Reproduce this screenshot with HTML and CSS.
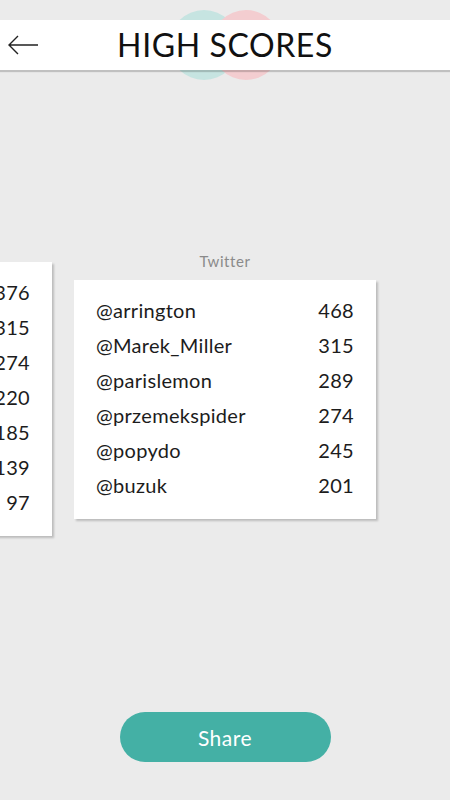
FILE: index.html
```html
<!DOCTYPE html>
<html>
<head>
<meta charset="utf-8">
<link rel="stylesheet" href="styles.css">
</head>
<body>
<div class="page">
  <div class="status"></div>
  <div class="header-wrap">
    <div class="blob blob-teal"></div>
    <div class="blob blob-pink"></div>
    <header class="header">
      <button class="back" aria-label="Back">
        <svg width="32" height="20" viewBox="0 0 32 20"><path d="M31 10H2M11 1L2 10L11 19" fill="none" stroke="#222" stroke-width="1.4"/></svg>
      </button>
      <h1 class="title">HIGH SCORES</h1>
    </header>
  </div>
  <main class="content">
    <div class="track">
      <section class="slide">
        <div class="label"></div>
        <div class="card">
          <div class="row"><span class="name"></span><span class="score">376</span></div>
          <div class="row"><span class="name"></span><span class="score">315</span></div>
          <div class="row"><span class="name"></span><span class="score">274</span></div>
          <div class="row"><span class="name"></span><span class="score">220</span></div>
          <div class="row"><span class="name"></span><span class="score">185</span></div>
          <div class="row"><span class="name"></span><span class="score">139</span></div>
          <div class="row"><span class="name"></span><span class="score">97</span></div>
        </div>
      </section>
      <section class="slide">
        <div class="label">Twitter</div>
        <div class="card">
          <div class="row"><span class="name">@arrington</span><span class="score">468</span></div>
          <div class="row"><span class="name">@Marek_Miller</span><span class="score">315</span></div>
          <div class="row"><span class="name">@parislemon</span><span class="score">289</span></div>
          <div class="row"><span class="name">@przemekspider</span><span class="score">274</span></div>
          <div class="row"><span class="name">@popydo</span><span class="score">245</span></div>
          <div class="row"><span class="name">@buzuk</span><span class="score">201</span></div>
        </div>
      </section>
    </div>
  </main>
  <footer class="footer">
    <button class="share">Share</button>
  </footer>
</div>
</body>
</html>
```
FILE: styles.css
```css
html, body {
  margin: 0;
  padding: 0;
}
body {
  background: #ebebeb;
  font-family: "Lato", "Open Sans", sans-serif;
  color: #222;
  overflow: hidden;
}
.page {
  width: 450px;
  height: 800px;
  display: flex;
  flex-direction: column;
  overflow: hidden;
}
.status {
  height: 20px;
  flex: none;
}
.header-wrap {
  position: relative;
  height: 52px;
  flex: none;
}
.blob {
  position: absolute;
  top: -10px;
  width: 70px;
  height: 70px;
  border-radius: 50%;
}
.blob-teal {
  left: 169px;
  background: #c6e4e1;
}
.blob-pink {
  left: 211px;
  background: #f3cdd0;
}
.header {
  position: relative;
  height: 50px;
  background: #fff;
  box-shadow: 0 2px 1px rgba(0,0,0,0.18);
  display: flex;
  align-items: center;
  justify-content: center;
}
.back {
  position: absolute;
  left: 7px;
  top: 15px;
  background: none;
  border: 0;
  padding: 0;
  width: 32px;
  height: 20px;
  display: flex;
}
.title {
  margin: 0;
  font-weight: 400;
  font-size: 32px;
  letter-spacing: 0.6px;
  line-height: 50px;
  color: #111;
}
.content {
  flex: 1;
  display: flex;
  align-items: center;
  overflow: hidden;
  padding-bottom: 2px;
}
.track {
  display: flex;
  align-items: center;
  gap: 22px;
  margin-left: -250px;
}
.slide {
  width: 302px;
  flex: none;
  display: flex;
  flex-direction: column;
  align-items: stretch;
}
.label {
  text-align: center;
  font-size: 15px;
  letter-spacing: 0.6px;
  line-height: 18px;
  height: 18px;
  color: #8a8a8a;
  margin-bottom: 10px;
}
.card {
  background: #fff;
  padding: 13px 22px 16px;
  box-shadow: 2px 2px 2px rgba(0,0,0,0.2);
}
.row {
  display: flex;
  justify-content: space-between;
  height: 35px;
  line-height: 35px;
  font-size: 20px;
  letter-spacing: 0.3px;
  color: #1c1c1c;
}
.footer {
  height: 100px;
  flex: none;
  display: flex;
  justify-content: center;
  align-items: flex-start;
  padding-top: 12px;
  box-sizing: border-box;
}
.share {
  width: 211px;
  height: 50px;
  border: 0;
  border-radius: 25px;
  background: #44b0a5;
  color: #fff;
  font-family: "Lato", "Open Sans", sans-serif;
  font-size: 21px;
  letter-spacing: 0.5px;
}
```
